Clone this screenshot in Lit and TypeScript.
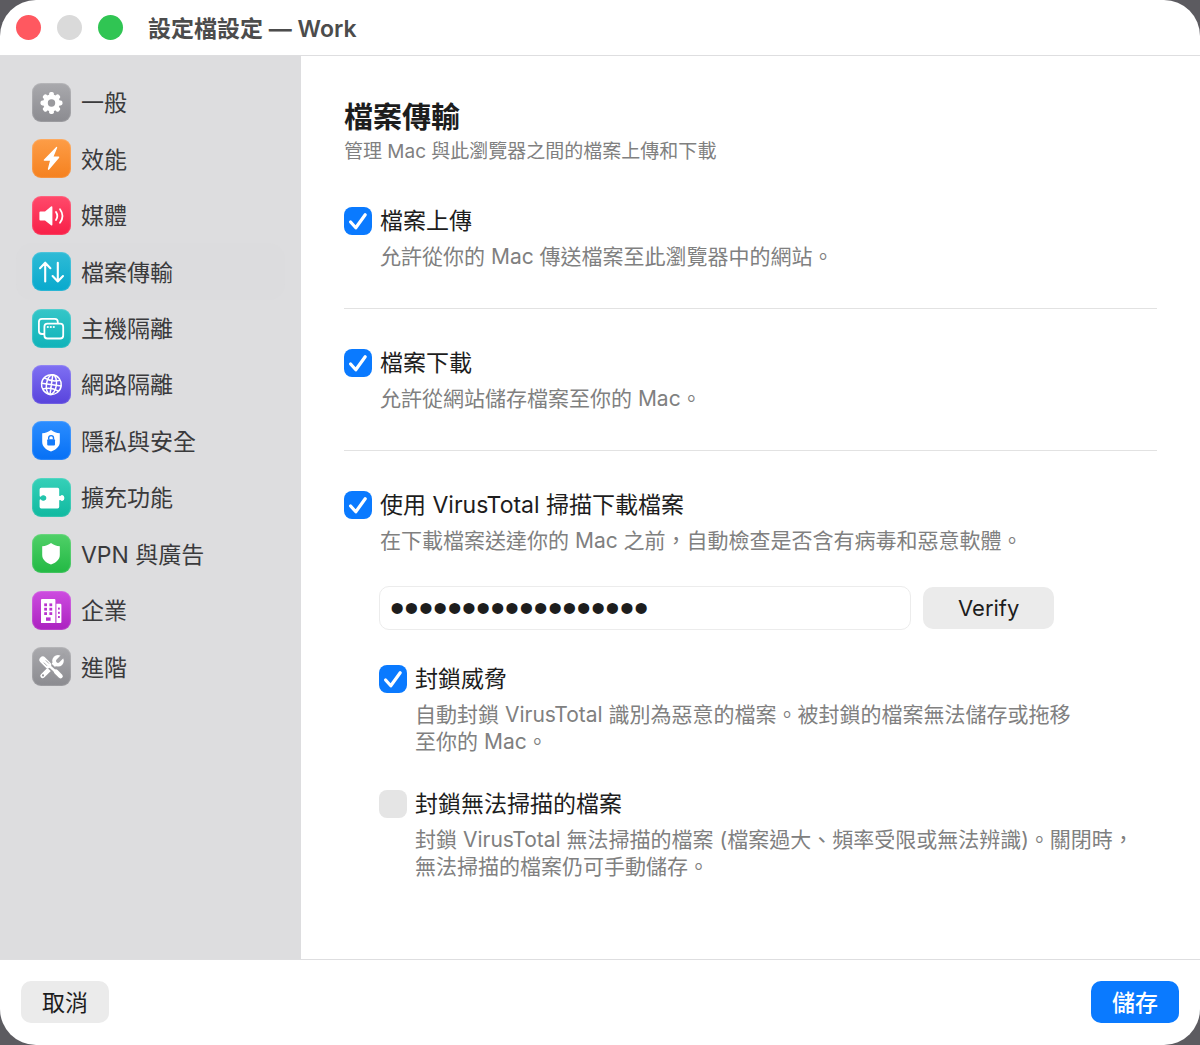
import { LitElement, html, css, svg, nothing } from "lit";
import { customElement, property, state } from "lit/decorators.js";
import { classMap } from "lit/directives/class-map.js";

const shieldPath =
  "M19 9 C21.5 11 24.5 12 27.8 12.3 V21 C27.8 25.8 24 28.6 19 30.6 C14 28.6 10.2 25.8 10.2 21 V12.3 C13.5 12 16.5 11 19 9 Z";

const glyphs: Record<string, unknown> = {
  general: svg`
    <circle cx="19.5" cy="20" r="8.4" fill="#fff"></circle>
    ${[0, 45, 90, 135].map(
      (a) => svg`<rect x="17.1" y="9" width="4.8" height="22" rx="1.8" fill="#fff" transform="rotate(${a} 19.5 20)"></rect>`
    )}
    <circle cx="19.5" cy="20" r="3.7" fill="#9a9a9e"></circle>`,
  performance: svg`<path d="M24.2 8 L11.8 20.8 Q11.4 21.8 12.4 21.8 H18 L15.8 30 Q16 31.4 17.2 30.6 L27.2 18.8 Q27.6 17.6 26.6 17.6 H21.6 L25.2 8.8 Q25.2 7.4 24.2 8 Z" fill="#fff"></path>`,
  media: svg`
    <path d="M8.4 15.6 H13 L19 10.6 Q20.4 9.8 20.4 11.4 V28.4 Q20.4 30 19 29.2 L13 24.4 H8.4 Q7.4 24.4 7.4 23.4 V16.6 Q7.4 15.6 8.4 15.6 Z" fill="#fff"></path>
    <path d="M24 16 Q26.6 20 24 24 M28 13.2 Q33 20 28 26.8" fill="none" stroke="#fff" stroke-width="1.8" stroke-linecap="round"></path>`,
  transfer: svg`<path d="M13.2 29.4 V10.8 M8 16.2 L13.2 10.8 L18.4 16.2 M25.8 10.8 V29.4 M20.6 24 L25.8 29.4 L31 24" fill="none" stroke="#fff" stroke-width="2.1" stroke-linecap="round" stroke-linejoin="round"></path>`,
  host: svg`
    <path d="M11.6 25 H10 Q6.9 25 6.9 22 V13 Q6.9 9.9 10 9.9 H22.8 Q25.8 9.9 25.8 13 V14" fill="none" stroke="#fff" stroke-width="1.8" stroke-linecap="round"></path>
    <rect x="12.4" y="14.7" width="18.8" height="14.8" rx="3" fill="none" stroke="#fff" stroke-width="1.8"></rect>
    <g fill="#fff"><circle cx="15.8" cy="18" r="1.1"></circle><circle cx="18.8" cy="18" r="1.1"></circle><circle cx="21.8" cy="18" r="1.1"></circle></g>`,
  network: svg`
    <g fill="none" stroke="#fff" stroke-width="1.5" transform="rotate(8 19.4 19.6)">
      <circle cx="19.4" cy="19.6" r="9.9"></circle>
      <ellipse cx="19.4" cy="19.6" rx="5" ry="9.9"></ellipse>
      <path d="M19.4 9.7 V29.5 M9.5 19.6 H29.3 M11.4 14 Q19.4 17.4 27.4 14 M11.4 25.2 Q19.4 21.8 27.4 25.2"></path>
    </g>`,
  privacy: svg`
    <path d="${shieldPath}" fill="#fff"></path>
    <rect x="15.2" y="18.2" width="7.8" height="6.4" rx="1" fill="#147bfa"></rect>
    <path d="M16.7 18.4 V16.8 Q16.7 14.6 19.1 14.6 Q21.5 14.6 21.5 16.8 V18.4" fill="none" stroke="#147bfa" stroke-width="1.4"></path>`,
  extensions: svg`
    <path d="M9.2 9.8 H25.6 Q27.2 9.8 27.2 11.4 V17.4 Q27.4 18.4 28.4 17.9 Q29 16.9 30.2 16.9 Q32.4 17.2 32.4 20 Q32.4 22.8 30.2 23.1 Q29 23.1 28.4 22.1 Q27.4 21.6 27.2 22.6 V28.8 Q27.2 30.4 25.6 30.4 H9.2 Q7.6 30.4 7.6 28.8 V22.2 Q7.8 21.1 8.9 21.4 Q10 23.2 12 22.8 Q14.4 22.2 14.4 20 Q14.4 17.8 12 17.2 Q10 16.8 8.9 18.6 Q7.8 18.9 7.6 17.8 V11.4 Q7.6 9.8 9.2 9.8 Z" fill="#fff"></path>`,
  vpn: svg`<path d="${shieldPath}" fill="#fff"></path>`,
  enterprise: svg`
    <path d="M10 8 H22.4 Q23.4 8 23.4 9 V32 H9 V9 Q9 8 10 8 Z M24.4 12.8 H28.2 Q29.4 12.8 29.4 14 V31 Q29.4 32 28.4 32 H24.4 Z" fill="#fff"></path>
    <g fill="#b934cf">
      ${[12.4, 16.8, 21.2].map(
        (y) => svg`<rect x="12.2" y="${y}" width="2.8" height="2.8"></rect><rect x="17.4" y="${y}" width="2.8" height="2.8"></rect>`
      )}
      <rect x="14" y="26.4" width="4.6" height="3.4"></rect>
      <rect x="26" y="16.6" width="1.8" height="2"></rect><rect x="26" y="20.8" width="1.8" height="2"></rect><rect x="26" y="25" width="1.8" height="2"></rect>
    </g>`,
  advanced: svg`
    <path d="M10.6 28.8 L22.6 17" stroke="#fff" stroke-width="4.6" stroke-linecap="round"></path>
    <circle cx="26" cy="13.8" r="5.8" fill="#fff"></circle>
    <path d="M26 13.8 L31.4 8.4" stroke="#a1a1a5" stroke-width="4" stroke-linecap="round"></path>
    <circle cx="11" cy="28.4" r="1.1" fill="#97979b"></circle>
    <path d="M10.6 12.4 L29 29.6" stroke="#9a9a9e" stroke-width="6"></path>
    <path d="M17 18.6 L24 25" stroke="#fff" stroke-width="2.4"></path>
    <path d="M24 24.6 L28.6 29.2" stroke="#fff" stroke-width="4.4" stroke-linecap="round"></path>
    <path d="M10.8 12.8 L15.8 17.8" stroke="#fff" stroke-width="6.8" stroke-linecap="round"></path>
    <path d="M11.8 15.6 L15 18.8 M13.8 13.4 L17 16.6" stroke="#97979b" stroke-width="0.8"></path>`,
};

const sections = [
  { id: "general", label: "一般" },
  { id: "performance", label: "效能" },
  { id: "media", label: "媒體" },
  { id: "transfer", label: "檔案傳輸" },
  { id: "host", label: "主機隔離" },
  { id: "network", label: "網路隔離" },
  { id: "privacy", label: "隱私與安全" },
  { id: "extensions", label: "擴充功能" },
  { id: "vpn", label: "VPN 與廣告" },
  { id: "enterprise", label: "企業" },
  { id: "advanced", label: "進階" },
];

@customElement("section-icon")
class SectionIcon extends LitElement {
  @property() name = "general";

  static styles = css`
    :host {
      display: block;
      flex: none;
    }
    .tile {
      display: block;
      width: 39px;
      height: 39px;
      border-radius: 9px;
      box-shadow: inset 0 0 1px 1px rgba(255, 255, 255, 0.16);
    }
    .general { background: linear-gradient(#a9a9ad, #8b8b90); }
    .performance { background: linear-gradient(#fd9d47, #f5811f); }
    .media { background: linear-gradient(#ff4a6b, #f81f47); }
    .transfer { background: linear-gradient(#2fbbd6, #08a9cd); }
    .host { background: linear-gradient(#35c6c8, #10b3b9); }
    .network { background: linear-gradient(#7f70f3, #5843dc); }
    .privacy { background: linear-gradient(#2b8dff, #0670f5); }
    .extensions { background: linear-gradient(#36d0b8, #10b9a0); }
    .vpn { background: linear-gradient(#50d068, #22b944); }
    .enterprise { background: linear-gradient(#cd4ce0, #ab21c0); }
    .advanced { background: linear-gradient(#a9a9ad, #8b8b90); }
  `;

  render() {
    return html`<svg class="tile ${this.name}" viewBox="0 0 39 39" aria-hidden="true">${glyphs[this.name]}</svg>`;
  }
}

@customElement("check-option")
class CheckOption extends LitElement {
  @property() label = "";
  @property({ type: Boolean }) checked = false;

  static styles = css`
    :host {
      display: block;
    }
    .option {
      display: grid;
      grid-template-columns: 28px minmax(0, 1fr);
      column-gap: 8px;
      row-gap: 8px;
    }
    .box {
      display: grid;
      width: 28px;
      height: 28px;
    }
    .box > * {
      grid-area: 1 / 1;
    }
    input {
      appearance: none;
      margin: 0;
      width: 28px;
      height: 28px;
      border-radius: 8px;
      background: #e5e5e5;
    }
    input:checked {
      background: #0a7aff;
    }
    .mark {
      pointer-events: none;
    }
    label {
      font-size: 23px;
      line-height: 28px;
      color: #1d1d1d;
    }
    .detail {
      grid-column: 2;
      font-size: 21px;
      line-height: 27px;
      color: #808080;
    }
  `;

  private toggle(e: Event) {
    this.checked = (e.target as HTMLInputElement).checked;
  }

  render() {
    return html`
      <div class="option">
        <span class="box">
          <input id="box" type="checkbox" .checked=${this.checked} @change=${this.toggle} aria-describedby="detail" />
          ${this.checked
            ? html`<svg class="mark" viewBox="0 0 28 28" aria-hidden="true">
                <path d="M6.6 15 L11.8 20.8 L21.2 7.8" fill="none" stroke="#fff" stroke-width="3.2" stroke-linecap="round" stroke-linejoin="round"></path>
              </svg>`
            : nothing}
        </span>
        <label for="box">${this.label}</label>
        <div class="detail" id="detail"><slot></slot></div>
      </div>
    `;
  }
}

@customElement("app-root")
class AppRoot extends LitElement {
  @state() private current = "transfer";

  static styles = css`
    :host {
      display: block;
      background: #5c5b60;
      font-family: Inter, "Noto Sans CJK TC", sans-serif;
      color: #1d1d1d;
    }
    * {
      box-sizing: border-box;
    }
    .window {
      display: flex;
      flex-direction: column;
      min-height: 100vh;
      background: #fff;
      border-radius: 36px;
      overflow: hidden;
    }
    button {
      font: inherit;
      color: inherit;
      border: 0;
      padding: 0;
    }
    .titlebar {
      display: flex;
      align-items: center;
      gap: 25px;
      height: 56px;
      padding: 0 16px;
      border-bottom: 1px solid #dedee0;
    }
    .lights {
      display: flex;
      gap: 16px;
    }
    .light {
      width: 25px;
      height: 25px;
      border-radius: 50%;
    }
    .close { background: #ff5860; }
    .minimize { background: #dadada; }
    .zoom { background: #30c553; }
    .name {
      margin: 0;
      padding-top: 2px;
      font-size: 23px;
      line-height: 28px;
      font-weight: 600;
      color: #4c4c4c;
    }
    .body {
      flex: 1;
      display: flex;
    }
    .sidebar {
      flex: none;
      width: 301px;
      padding: 18px 16px;
      background: #dddddf;
    }
    .list {
      display: grid;
      grid-auto-rows: 1fr;
      min-height: 621px;
      margin: 0;
      padding: 0;
      list-style: none;
    }
    .item {
      display: flex;
      align-items: center;
      gap: 10px;
      width: 100%;
      height: 100%;
      padding: 0 16px;
      border-radius: 16px;
      background: none;
      font-size: 23px;
      text-align: left;
      color: #3a3a3c;
    }
    .text {
      padding-bottom: 2px;
    }
    .current {
      background: #dcdcde;
    }
    .content {
      flex: 1;
      min-width: 0;
      padding: 44px 43px;
    }
    h2 {
      margin: 0 0 4px;
      font-size: 29px;
      line-height: 36px;
      font-weight: 700;
    }
    .intro {
      margin: 0 0 43px;
      font-size: 19px;
      line-height: 24px;
      color: #808080;
    }
    hr {
      margin: 38px 0 40px;
      border: 0;
      border-top: 1px solid #e2e2e2;
    }
    .nested {
      display: grid;
      gap: 35px;
      padding: 0 16px 0 35px;
    }
    .key {
      display: flex;
      align-items: center;
      gap: 12px;
      margin-top: 32px;
    }
    .secret {
      flex: 0 1 532px;
      min-width: 0;
      height: 44px;
      padding: 0 10px;
      border: 1px solid #ececec;
      border-radius: 10px;
      background: #fff;
      font: 41px "Liberation Sans", sans-serif;
      color: #1d1d1d;
    }
    .push {
      height: 42px;
      padding: 0 21px 2px;
      border-radius: 10px;
      background: #ebebeb;
      font-size: 23px;
    }
    .verify {
      padding: 0 35px;
      font-size: 22px;
    }
    .primary {
      background: #0a7aff;
      color: #fff;
      font-weight: 500;
    }
    .keep {
      white-space: nowrap;
    }
    .footer {
      display: flex;
      justify-content: space-between;
      padding: 21px 21px 22px;
      border-top: 1px solid #dedee0;
    }
  `;

  render() {
    return html`
      <div class="window" lang="zh-Hant">
        <header class="titlebar">
          <div class="lights">
            <button class="light close" aria-label="關閉"></button>
            <button class="light minimize" aria-label="縮到最小" disabled></button>
            <button class="light zoom" aria-label="縮放"></button>
          </div>
          <h1 class="name">設定檔設定 — Work</h1>
        </header>
        <div class="body">
          <nav class="sidebar">
            <ul class="list">
              ${sections.map(
                (s) => html`<li>
                  <button
                    class=${classMap({ item: true, current: s.id === this.current })}
                    aria-current=${s.id === this.current ? "page" : "false"}
                    @click=${() => (this.current = s.id)}
                  >
                    <section-icon name=${s.id}></section-icon>
                    <span class="text">${s.label}</span>
                  </button>
                </li>`
              )}
            </ul>
          </nav>
          <main class="content">
            <h2>檔案傳輸</h2>
            <p class="intro">管理 Mac 與此瀏覽器之間的檔案上傳和下載</p>
            <check-option label="檔案上傳" checked>允許從你的 Mac 傳送檔案至此瀏覽器中的網站。</check-option>
            <hr />
            <check-option label="檔案下載" checked>允許從網站儲存檔案至你的 Mac。</check-option>
            <hr />
            <check-option label="使用 VirusTotal 掃描下載檔案" checked
              >在下載檔案送達你的 Mac 之前，自動檢查是否含有病毒和惡意軟體。</check-option
            >
            <div class="nested">
              <div class="key">
                <input class="secret" type="password" aria-label="VirusTotal API" value="000000000000000000" />
                <button class="push verify">Verify</button>
              </div>
              <check-option label="封鎖威脅" checked
                >自動封鎖 VirusTotal 識別為惡意的檔案。被封鎖的檔案無法儲存或拖移<span class="keep">至你的 Mac。</span></check-option
              >
              <check-option label="封鎖無法掃描的檔案"
                >封鎖 VirusTotal 無法掃描的檔案 (檔案過大、頻率受限或無法辨識)。關閉時，無法掃描的檔案仍可手動儲存。</check-option
              >
            </div>
          </main>
        </div>
        <footer class="footer">
          <button class="push">取消</button>
          <button class="push primary">儲存</button>
        </footer>
      </div>
    `;
  }
}
